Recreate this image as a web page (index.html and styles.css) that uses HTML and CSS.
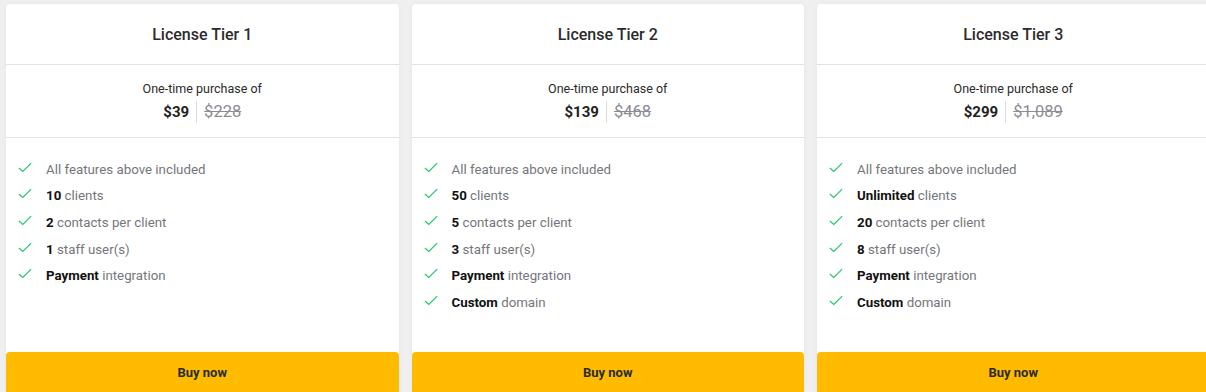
FILE: index.html
```html
<!DOCTYPE html>
<html lang="en">
<head>
<meta charset="utf-8">
<title>License Tiers</title>
<link rel="stylesheet" href="styles.css">
</head>
<body>
<div class="tiers">
  <div class="card">
    <div class="card-head">License Tier 1</div>
    <div class="price">
      <div class="price-label">One-time purchase of</div>
      <div class="price-row"><span class="now">$39</span><span class="was">$228</span></div>
    </div>
    <ul class="features">
      <li><svg class="check" viewBox="0 0 16 12"><path d="M1 6.5 L5.5 10.5 L15 1"/></svg><span>All features above included</span></li>
      <li><svg class="check" viewBox="0 0 16 12"><path d="M1 6.5 L5.5 10.5 L15 1"/></svg><span><b>10</b> clients</span></li>
      <li><svg class="check" viewBox="0 0 16 12"><path d="M1 6.5 L5.5 10.5 L15 1"/></svg><span><b>2</b> contacts per client</span></li>
      <li><svg class="check" viewBox="0 0 16 12"><path d="M1 6.5 L5.5 10.5 L15 1"/></svg><span><b>1</b> staff user(s)</span></li>
      <li><svg class="check" viewBox="0 0 16 12"><path d="M1 6.5 L5.5 10.5 L15 1"/></svg><span><b>Payment</b> integration</span></li>
    </ul>
    <button class="buy">Buy now</button>
  </div>
  <div class="card">
    <div class="card-head">License Tier 2</div>
    <div class="price">
      <div class="price-label">One-time purchase of</div>
      <div class="price-row"><span class="now">$139</span><span class="was">$468</span></div>
    </div>
    <ul class="features">
      <li><svg class="check" viewBox="0 0 16 12"><path d="M1 6.5 L5.5 10.5 L15 1"/></svg><span>All features above included</span></li>
      <li><svg class="check" viewBox="0 0 16 12"><path d="M1 6.5 L5.5 10.5 L15 1"/></svg><span><b>50</b> clients</span></li>
      <li><svg class="check" viewBox="0 0 16 12"><path d="M1 6.5 L5.5 10.5 L15 1"/></svg><span><b>5</b> contacts per client</span></li>
      <li><svg class="check" viewBox="0 0 16 12"><path d="M1 6.5 L5.5 10.5 L15 1"/></svg><span><b>3</b> staff user(s)</span></li>
      <li><svg class="check" viewBox="0 0 16 12"><path d="M1 6.5 L5.5 10.5 L15 1"/></svg><span><b>Payment</b> integration</span></li>
      <li><svg class="check" viewBox="0 0 16 12"><path d="M1 6.5 L5.5 10.5 L15 1"/></svg><span><b>Custom</b> domain</span></li>
    </ul>
    <button class="buy">Buy now</button>
  </div>
  <div class="card">
    <div class="card-head">License Tier 3</div>
    <div class="price">
      <div class="price-label">One-time purchase of</div>
      <div class="price-row"><span class="now">$299</span><span class="was">$1,089</span></div>
    </div>
    <ul class="features">
      <li><svg class="check" viewBox="0 0 16 12"><path d="M1 6.5 L5.5 10.5 L15 1"/></svg><span>All features above included</span></li>
      <li><svg class="check" viewBox="0 0 16 12"><path d="M1 6.5 L5.5 10.5 L15 1"/></svg><span><b>Unlimited</b> clients</span></li>
      <li><svg class="check" viewBox="0 0 16 12"><path d="M1 6.5 L5.5 10.5 L15 1"/></svg><span><b>20</b> contacts per client</span></li>
      <li><svg class="check" viewBox="0 0 16 12"><path d="M1 6.5 L5.5 10.5 L15 1"/></svg><span><b>8</b> staff user(s)</span></li>
      <li><svg class="check" viewBox="0 0 16 12"><path d="M1 6.5 L5.5 10.5 L15 1"/></svg><span><b>Payment</b> integration</span></li>
      <li><svg class="check" viewBox="0 0 16 12"><path d="M1 6.5 L5.5 10.5 L15 1"/></svg><span><b>Custom</b> domain</span></li>
    </ul>
    <button class="buy">Buy now</button>
  </div>
</div>
</body>
</html>
```
FILE: styles.css
```css
html, body {
  margin: 0;
  padding: 0;
  background: #efefef;
  overflow: hidden;
  height: 392px;
}
body {
  font-family: Roboto, "Liberation Sans", Arial, sans-serif;
  color: #212529;
}
.tiers {
  display: flex;
  gap: 13px;
  padding: 4px 0 0 6px;
  width: 1300px;
}
.card {
  width: 392.5px;
  height: 388px;
  flex: none;
  background: #fff;
  border-radius: 4px;
  box-shadow: 0 0 4px rgba(0,0,0,0.04);
  display: flex;
  flex-direction: column;
}
.card-head {
  height: 60px;
  display: flex;
  align-items: center;
  justify-content: center;
  font-size: 16px;
  font-weight: 500;
  color: #2b2b2b;
  border-bottom: 1px solid #e1e3e8;
}
.price {
  height: 73px;
  border-bottom: 1px solid #e1e3e8;
  display: flex;
  flex-direction: column;
  align-items: center;
  padding-top: 15px;
  box-sizing: border-box;
}
.price-label {
  font-size: 12.5px;
  line-height: 18px;
  color: #2b2b2b;
}
.price-row {
  display: flex;
  align-items: center;
  margin-top: 3px;
  height: 22px;
  font-size: 15px;
}
.now {
  font-weight: 700;
  color: #222;
  padding-right: 7px;
  border-right: 1px solid #dcdcdc;
  line-height: 22px;
}
.was {
  font-size: 16.5px;
  color: #8a8d93;
  text-decoration: line-through;
  padding-left: 7px;
  line-height: 22px;
}
.features {
  list-style: none;
  margin: 0;
  padding: 18px 0 0 12px;
  flex: 1;
}
.features li {
  height: 26.6px;
  display: flex;
  align-items: center;
  font-size: 13.3px;
  color: #75767c;
}
.features b {
  color: #111;
  font-weight: 700;
}
.check {
  width: 14px;
  height: 11px;
  margin-right: 14px;
  margin-top: -4px;
  fill: none;
  stroke: #28c76f;
  stroke-width: 1.4;
}
.buy {
  height: 40px;
  border: none;
  border-radius: 4px 4px 0 0;
  background: #ffbb00;
  color: #2a2a2a;
  font-family: Roboto, "Liberation Sans", Arial, sans-serif;
  font-size: 13px;
  font-weight: 700;
  flex: none;
}
```
